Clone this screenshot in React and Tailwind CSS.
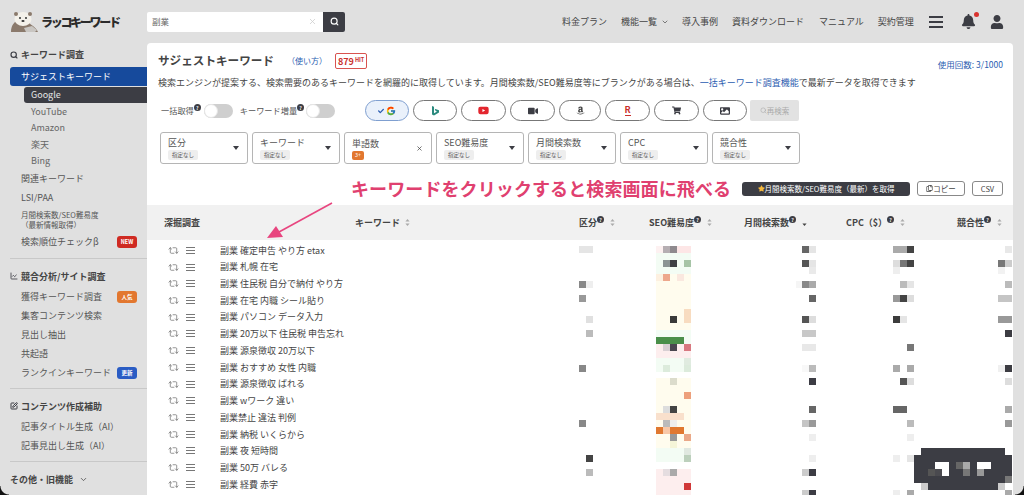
import React from "react";
import { Repeat2, ChevronDown, Search, X, LineChart, SquarePen } from "lucide-react";
import { FaBell, FaUser, FaYoutube, FaVideo, FaAmazon, FaShoppingCart, FaImage, FaCheck, FaStar, FaRegCopy } from "react-icons/fa";
import { FcGoogle } from "react-icons/fc";

const Otter = () => (
  <svg width="29" height="22" viewBox="0 0 29 22">
    <path d="M1 21c0-6 3-11 8-12l9 2c3 3 8 5 10 10z" fill="#8b7a6c" />
    <path d="M14 17l8-2 5 4-2 2h-9z" fill="#c9c6c2" />
    <ellipse cx="13" cy="8" rx="8.5" ry="7" fill="#f4f1ea" />
    <circle cx="6" cy="3" r="2" fill="#8b7a6c" />
    <circle cx="20" cy="3" r="2" fill="#8b7a6c" />
    <circle cx="10" cy="7" r="1" fill="#333" />
    <circle cx="16" cy="7" r="1" fill="#333" />
    <ellipse cx="13" cy="10" rx="1.6" ry="1.1" fill="#333" />
  </svg>
);

const Help = () => (
  <span className="inline-flex h-[7px] w-[7px] -translate-y-[3px] items-center justify-center rounded-full bg-[#3c3d44] text-[5px] font-bold leading-none text-white">
    ?
  </span>
);

const Sort = ({ active }) => (
  <svg width="5" height="9" viewBox="0 0 5 9" className="shrink-0">
    {!active && <path d="M2.5 1L4.6 3.6H.4z" fill="#aaa" />}
    <path d="M2.5 8L.4 5.4h4.2z" fill={active ? "#444" : "#aaa"} />
  </svg>
);

const Caret = () => (
  <svg width="6" height="4" viewBox="0 0 6 4" className="shrink-0">
    <path d="M0 0h6L3 4z" fill="#3c3d44" />
  </svg>
);

const Toggle = () => (
  <div className="h-[14px] w-[29px] rounded-full bg-[#cfcfcf]">
    <div className="h-[14px] w-[14px] rounded-full border border-[#e6e6e6] bg-white" />
  </div>
);

const Filter = ({ label, selected }) => (
  <div className="flex h-[32px] w-[88px] items-center justify-between rounded-[3px] border border-[#b5b5b5] bg-white pl-[7px] pr-[8px]">
    <div className="flex flex-col items-start">
      <span className="text-[9px] leading-[13px] text-[#555]">{label}</span>
      {selected ? (
        <span className="mt-[1px] rounded-[2px] bg-[#e2772f] px-[3px] text-[5.5px] leading-[9px] text-white">3+</span>
      ) : (
        <span className="mt-[1px] rounded-[2px] bg-[#eeeeee] px-[4px] text-[5.5px] leading-[10px] text-[#555]">指定なし</span>
      )}
    </div>
    {selected ? <X size={7} strokeWidth={2.5} className="text-[#444]" /> : <Caret />}
  </div>
);

const Pill = ({ w, active, children }) => (
  <div
    className={`flex h-[21px] items-center justify-center rounded-full border ${w} ${
      active ? "border-[#7f9fd0] bg-[#eaf1fb]" : "border-[#777] bg-white"
    }`}
  >
    {children}
  </div>
);

const Item = ({ children, badge, badgeColor }) => (
  <div className="flex h-[19px] items-center justify-between pl-[21px] pr-[10px] text-[9px] text-[#555]">
    <span>{children}</span>
    {badge && (
      <span className={`flex h-[12px] w-[20px] items-center justify-center rounded-[3px] text-[5.5px] font-bold text-white ${badgeColor}`}>
        {badge}
      </span>
    )}
  </div>
);

const SubItem = ({ children }) => (
  <div className="flex h-[16.6px] items-center pl-[31px] text-[9px] text-[#666]">{children}</div>
);

const Heading = ({ icon, children }) => (
  <div className="flex h-[20px] items-center gap-[3px] pl-[10px] text-[9px] font-bold text-[#444]">
    {icon}
    {children}
  </div>
);

const keywords = [
  "副業 確定申告 やり方 etax",
  "副業 札幌 在宅",
  "副業 住民税 自分で納付 やり方",
  "副業 在宅 内職 シール貼り",
  "副業 パソコン データ入力",
  "副業 20万以下 住民税 申告忘れ",
  "副業 源泉徴収 20万以下",
  "副業 おすすめ 女性 内職",
  "副業 源泉徴収 ばれる",
  "副業 wワーク 違い",
  "副業禁止 違法 判例",
  "副業 納税 いくらから",
  "副業 夜 短時間",
  "副業 50万 バレる",
  "副業 経費 赤字",
];

// mosaic blocks of the blurred data columns: [row, col, colour, width, height]
const seoBands = [
  [0, 1, "#fdf1f1"], [1, 3, "#f3fcf4"], [4, 8, "#fffcee"], [12, 2, "#f3fcf4"], [14, 2, "#fdeeee"],
  [16, 2, "#f3fcf4"], [19, 10, "#fffcee"], [29, 2, "#f3fcf4"], [32, 4, "#fdeeee"],
];

const blocks = [
  [0, 0, "#e5e5e5", 2], [0, 12, "#b5aeb2"], [0, 13, "#8f8a8e"], [0, 14, "#fde6e6", 2], [0, 32, "#666"], [0, 33, "#e5e5e5"],
  [0, 45, "#aaa", 2], [0, 47, "#444"], [0, 61, "#e8e8e8"],
  [2, 12, "#8b9494"], [2, 13, "#3e4044"], [2, 15, "#a6c4a6"], [2, 32, "#555"], [2, 33, "#e5e5e5"], [2, 45, "#ddd"], [2, 46, "#777"], [2, 47, "#444"], [2, 60, "#777"], [2, 61, "#ccc"],
  [3, 33, "#eaeaea"], [3, 45, "#eeeeee"], [3, 60, "#f2f2f2"],
  [4, 11, "#fdf0e0"], [4, 12, "#eda78c"], [4, 14, "#fae8df"],
  [5, 0, "#888"], [5, 1, "#eee"], [5, 31, "#f5f5f5"], [5, 32, "#888"], [5, 33, "#aaa"], [5, 46, "#bbb"], [5, 47, "#e5e5e5"], [5, 61, "#bbb"],
  [7, 0, "#999"], [7, 33, "#666"], [7, 45, "#999"], [7, 46, "#444"], [7, 47, "#ddd"], [7, 60, "#c5c5c5", 2],
  [9, 15, "#f8dcc0", 1, 2], [10, 1, "#e0e0e0"], [10, 13, "#3a3a3a"], [10, 32, "#555"], [10, 33, "#ddd"], [10, 45, "#3c3c3c"], [10, 46, "#e5e5e5"], [10, 60, "#999", 2],
  [12, 1, "#bbb"], [12, 32, "#c8c8c8", 2], [12, 61, "#3c3c42"],
  [13, 11, "#4a8f4a", 4],
  [14, 12, "#d8cfd3"], [14, 13, "#4a4650"], [14, 15, "#d87880"], [14, 32, "#e8e8e8", 2], [14, 47, "#777"],
  [16, 15, "#e0ebe0"],
  [17, 0, "#888"], [17, 12, "#dcebdc"], [17, 15, "#dcebdc"], [17, 32, "#f8f8f8"], [17, 33, "#bbb"], [17, 45, "#aaa"], [17, 47, "#aaa"], [17, 60, "#f0f0f0"], [17, 61, "#3c3c42"],
  [19, 13, "#dcdccc"], [19, 33, "#3c3c44"], [19, 46, "#555"], [19, 47, "#ddd"], [19, 61, "#ddd"],
  [21, 15, "#eda07c"],
  [23, 12, "#ddd"], [23, 13, "#444"], [23, 33, "#666"], [23, 45, "#666", 2], [23, 61, "#aaa"],
  [24, 11, "#f9e0cc", 4],
  [25, 0, "#888"], [25, 12, "#bbb"], [25, 13, "#eee"], [25, 32, "#c5c5c5"], [25, 33, "#999"], [25, 47, "#bbb"], [25, 61, "#999"],
  [26, 11, "#e07830"], [26, 12, "#f8c8a8"], [26, 13, "#e07830", 2],
  [27, 13, "#999"], [27, 15, "#eaa888"], [27, 33, "#eee"], [27, 47, "#eee"],
  [28, 13, "#f5f5d8"],
  [29, 15, "#e0e8e0"],
  [30, 1, "#444"], [30, 15, "#bcd0bc"], [30, 33, "#eee"], [30, 45, "#eee"], [30, 47, "#e5e5e5"],
  [32, 1, "#bbb"], [32, 12, "#e5dde0"], [32, 13, "#aaa"], [32, 32, "#ccc"], [32, 33, "#3c3c44"],
  [34, 15, "#d03838"],
  [35, 32, "#ccc"], [35, 33, "#3c3c44"], [35, 45, "#eee"], [35, 47, "#aaa"], [35, 61, "#aaa"],
  [36, 11, "#e08838", 4],
  // floating dark banner bottom right
  [29, 49, "#3c3d44", 12], [30, 48, "#3c3d44", 14, 4], [34, 50, "#3c3d44", 10], [34, 49, "#ccc"], [34, 60, "#ccc"],
  [31, 51, "#fff", 2], [31, 54, "#666"], [31, 55, "#aaa"], [31, 57, "#fff", 2],
  [32, 50, "#555"], [32, 51, "#4a4a4f"], [32, 52, "#fff"], [32, 55, "#777"], [32, 57, "#999"],
  [33, 61, "#777"],
];

const Mosaic = () => (
  <svg width="433" height="258" viewBox="0 0 62 37" shapeRendering="crispEdges" className="mt-[4px] shrink-0">
    {seoBands.map(([r, h, c], i) => (
      <rect key={i} x={11} y={r} width={5} height={h} fill={c} />
    ))}
    {blocks.map(([r, col, c, w = 1, h = 1], i) => (
      <rect key={i} x={col} y={r} width={w} height={h} fill={c} />
    ))}
  </svg>
);

export default function App() {
  return (
    <div className="flex h-[495px] w-[1024px] flex-col overflow-hidden bg-[#e0e0e0] font-['Noto_Sans_CJK_JP','Noto_Sans',sans-serif] text-[#444]">
      {/* header */}
      <header className="flex h-[43px] shrink-0 items-center">
        <div className="flex w-[147px] items-center pl-[10px]">
          <Otter />
          <span className="ml-[2px] text-[12px] font-black tracking-[-2.3px] text-[#2b2b2b]">ラッコキーワード</span>
        </div>
        <div className="flex h-[20px] w-[198px] items-center rounded-[2px] bg-white">
          <span className="flex-1 pl-[5px] text-[8.5px] text-[#666]">副業</span>
          <X size={9} className="mr-[6px] text-[#ccc]" />
          <div className="flex h-[20px] w-[22px] items-center justify-center rounded-r-[2px] bg-[#3c3d44]">
            <Search size={9} strokeWidth={3} className="text-white" />
          </div>
        </div>
        <nav className="ml-[217px] flex items-center text-[9px] text-[#444]">
          <span>料金プラン</span>
          <span className="ml-[14px] flex items-center gap-[4px]">
            機能一覧 <ChevronDown size={8} />
          </span>
          <span className="ml-[13px]">導入事例</span>
          <span className="ml-[14px]">資料ダウンロード</span>
          <span className="ml-[15px]">マニュアル</span>
          <span className="ml-[14px]">契約管理</span>
          <div className="ml-[15px] flex h-[12px] w-[14px] flex-col justify-between">
            <div className="h-[2px] bg-[#3c3d44]" />
            <div className="h-[2px] bg-[#3c3d44]" />
            <div className="h-[2px] bg-[#3c3d44]" />
          </div>
          <div className="relative ml-[18px]">
            <FaBell size={15} className="text-[#3c3d44]" />
            <span className="absolute -right-[3px] -top-[2px] h-[5px] w-[5px] rounded-full bg-[#d9332f]" />
          </div>
          <FaUser size={14} className="ml-[14px] text-[#3c3d44]" />
        </nav>
      </header>

      <div className="flex min-h-0 flex-1">
        {/* sidebar */}
        <aside className="w-[147px] shrink-0 pt-[2px]">
          <Heading icon={<Search size={8} strokeWidth={3.5} className="text-[#3c3d44]" />}>キーワード調査</Heading>
          <div className="ml-[10px] mt-[2px] flex h-[19px] items-center rounded-l-[3px] bg-[#164a9c] pl-[11px] text-[9px] text-white">
            サジェストキーワード
          </div>
          <div className="ml-[24px] mt-[1px] flex h-[16px] items-center rounded-l-[3px] bg-[#3c3d44] pl-[7px] text-[9px] text-[#e5e5e5]">
            Google
          </div>
          <SubItem>YouTube</SubItem>
          <SubItem>Amazon</SubItem>
          <SubItem>楽天</SubItem>
          <SubItem>Bing</SubItem>
          <Item>関連キーワード</Item>
          <Item>LSI/PAA</Item>
          <div className="flex h-[25px] flex-col justify-center pl-[21px] text-[7.5px] leading-[10px] text-[#555]">
            <span>月間検索数/SEO難易度</span>
            <span>（最新情報取得）</span>
          </div>
          <Item badge="NEW" badgeColor="bg-[#cf2a22]">検索順位チェックβ</Item>
          <div className="ml-[10px] mt-[7px] h-px bg-[#c8c8c8]" />
          <div className="mt-[7px]">
            <Heading icon={<LineChart size={8} strokeWidth={2.5} className="text-[#3c3d44]" />}>競合分析/サイト調査</Heading>
          </div>
          <div className="mt-[1px]">
            <Item badge="人気" badgeColor="bg-[#e2772f]">獲得キーワード調査</Item>
            <Item>集客コンテンツ検索</Item>
            <Item>見出し抽出</Item>
            <Item>共起語</Item>
            <Item badge="更新" badgeColor="bg-[#2a5cc4]">ランクインキーワード</Item>
          </div>
          <div className="ml-[10px] mt-[6px] h-px bg-[#c8c8c8]" />
          <div className="mt-[7px]">
            <Heading icon={<SquarePen size={8} strokeWidth={3} className="text-[#3c3d44]" />}>コンテンツ作成補助</Heading>
          </div>
          <div className="mt-[1px]">
            <Item>記事タイトル生成（AI）</Item>
            <Item>記事見出し生成（AI）</Item>
          </div>
          <div className="ml-[10px] mt-[6px] h-px bg-[#c8c8c8]" />
          <div className="mt-[7px]">
            <Heading>
              その他・旧機能 <ChevronDown size={9} className="ml-[3px]" />
            </Heading>
          </div>
        </aside>

        {/* main card */}
        <main className="relative w-[866px] shrink-0 rounded-t-[4px] bg-white">
          <div className="mt-[9px] flex h-[18px] items-center pl-[11px] pr-[10px]">
            <h1 className="text-[11.6px] font-bold text-[#444]">サジェストキーワード</h1>
            <span className="ml-[13px] text-[8px] text-[#2a5cb0]">（使い方）</span>
            <span className="ml-[8px] flex h-[16px] items-center gap-[1px] rounded-[2px] border border-[#d9534f] px-[2px] font-bold leading-none text-[#c9302c]">
              <span className="text-[9px]">879</span>
              <span className="text-[5.5px]">HIT</span>
            </span>
            <span className="ml-auto mt-[7px] text-[8.5px] text-[#2a5cb0]">使用回数: 3/1000</span>
          </div>
          <p className="mt-[6px] h-[14px] pl-[11px] text-[9px] leading-[14px] text-[#444]">
            検索エンジンが提案する、検索需要のあるキーワードを網羅的に取得しています。月間検索数/SEO難易度等にブランクがある場合は、
            <span className="text-[#2a5cb0]">一括キーワード調査機能</span>で最新データを取得できます
          </p>

          <div className="mt-[10px] flex h-[21px] items-center pl-[14px]">
            <span className="text-[8.2px] text-[#555]">一括取得</span>
            <Help />
            <div className="ml-[3px]"><Toggle /></div>
            <span className="ml-[7px] text-[8.2px] text-[#555]">キーワード増量</span>
            <Help />
            <div className="ml-[2px]"><Toggle /></div>
            <div className="ml-[30px] flex items-center gap-[4px]">
              <Pill w="w-[44px]" active>
                <FaCheck size={6} className="mr-[2px] text-[#2a5cb0]" />
                <FcGoogle size={10} />
              </Pill>
              <Pill w="w-[44px]">
                <svg width="7" height="10" viewBox="0 0 7 10">
                  <path d="M0 0l2 .7v6.6l3-1.7-1.4-.7-.9-2.2L7 4.3v2.3L2 9.6 0 8.4z" fill="#2b8a7e" />
                </svg>
              </Pill>
              <Pill w="w-[45px]"><FaYoutube size={11} className="text-[#e3262e]" /></Pill>
              <Pill w="w-[45px]"><FaVideo size={10} className="text-[#3c3d44]" /></Pill>
              <Pill w="w-[42px]"><FaAmazon size={9} className="text-[#444]" /></Pill>
              <Pill w="w-[45px]"><span className="border-b border-[#c9302c] text-[9px] font-bold leading-[10px] text-[#c9302c]">R</span></Pill>
              <Pill w="w-[45px]"><FaShoppingCart size={9} className="text-[#3c3d44]" /></Pill>
              <Pill w="w-[44px]"><FaImage size={10} className="text-[#3c3d44]" /></Pill>
            </div>
            <div className="ml-[3px] flex h-[21px] w-[49px] items-center justify-center rounded-[2px] bg-[#e2e2e2] text-[7.5px] text-[#aaa]">
              <Search size={7} />再検索
            </div>
          </div>

          <div className="mt-[11px] flex gap-[4px] pl-[13px]">
            <Filter label="区分" />
            <Filter label="キーワード" />
            <Filter label="単語数" selected />
            <Filter label="SEO難易度" />
            <Filter label="月間検索数" />
            <Filter label="CPC" />
            <Filter label="競合性" />
          </div>

          <div className="mt-[8px] flex h-[33px] items-center pr-[10px]">
            <span className="ml-[204px] w-[381px] whitespace-nowrap text-[18px] font-bold tracking-[0.1px] text-[#e0406f]">
              キーワードをクリックすると検索画面に飛べる
            </span>
            <button className="ml-[10px] flex h-[14px] w-[168px] items-center justify-center rounded-[3px] bg-[#3c3d44] text-[7.5px] text-white">
              <FaStar size={7} className="text-[#f5b83d]" />
              月間検索数/SEO難易度（最新）を取得
            </button>
            <button className="ml-[7px] flex h-[15px] w-[48px] items-center justify-center rounded-[3px] border border-[#888] text-[7.5px] text-[#444]">
              <FaRegCopy size={7} />コピー
            </button>
            <button className="ml-[7px] flex h-[15px] w-[31px] items-center justify-center rounded-[3px] border border-[#888] text-[7.5px] text-[#444]">
              CSV
            </button>
          </div>

          {/* table header */}
          <div className="flex h-[35px] items-center bg-[#f1f1f1] pl-[17px] text-[9px] font-semibold text-[#444]">
            <span className="w-[191px]">深掘調査</span>
            <span className="flex w-[224px] items-center gap-[5px]">キーワード<Sort /></span>
            <span className="flex w-[70px] items-center">区分<Help /><span className="ml-[6px]"><Sort /></span></span>
            <span className="flex w-[95px] items-center">SEO難易度<Help /><span className="ml-[6px]"><Sort /></span></span>
            <span className="flex w-[102px] items-center">月間検索数<Help /><span className="ml-[6px]"><Sort active /></span></span>
            <span className="flex w-[111px] items-center">CPC（$）<Help /><span className="ml-[6px]"><Sort /></span></span>
            <span className="flex items-center">競合性<Help /><span className="ml-[6px]"><Sort /></span></span>
          </div>

          {/* table body */}
          <div className="flex pt-[2px]">
            <div className="w-[432px] shrink-0">
              {keywords.map((k) => (
                <div key={k} className="flex h-[16.72px] items-center pl-[21px] text-[#666]">
                  <Repeat2 size={11} strokeWidth={1.5} />
                  <svg width="9" height="7" viewBox="0 0 9 7" className="ml-[7px] shrink-0">
                    <path d="M0 .5h9M0 3.5h9M0 6.5h9" stroke="#777" strokeWidth="1" />
                  </svg>
                  <span className="ml-[25px] whitespace-nowrap text-[9px] text-[#444]">{k}</span>
                </div>
              ))}
            </div>
            <Mosaic />
          </div>

          {/* pink arrow over the table header */}
          <svg width="72" height="40" viewBox="0 0 72 40" className="absolute left-[118px] top-[158px]">
            <path d="M67 2L14 31" stroke="#e8457f" strokeWidth="1.6" fill="none" />
            <path d="M2 37l9-12 7 11z" fill="#e8457f" />
          </svg>
        </main>
      </div>

      {/* rounded window corners */}
      <div className="pointer-events-none absolute left-0 top-[486px] h-[9px] w-[9px] [background:radial-gradient(circle_at_100%_0,transparent_8px,#111_9px)]" />
      <div className="pointer-events-none absolute left-[1015px] top-[486px] h-[9px] w-[9px] [background:radial-gradient(circle_at_0_0,transparent_8px,#111_9px)]" />
    </div>
  );
}
